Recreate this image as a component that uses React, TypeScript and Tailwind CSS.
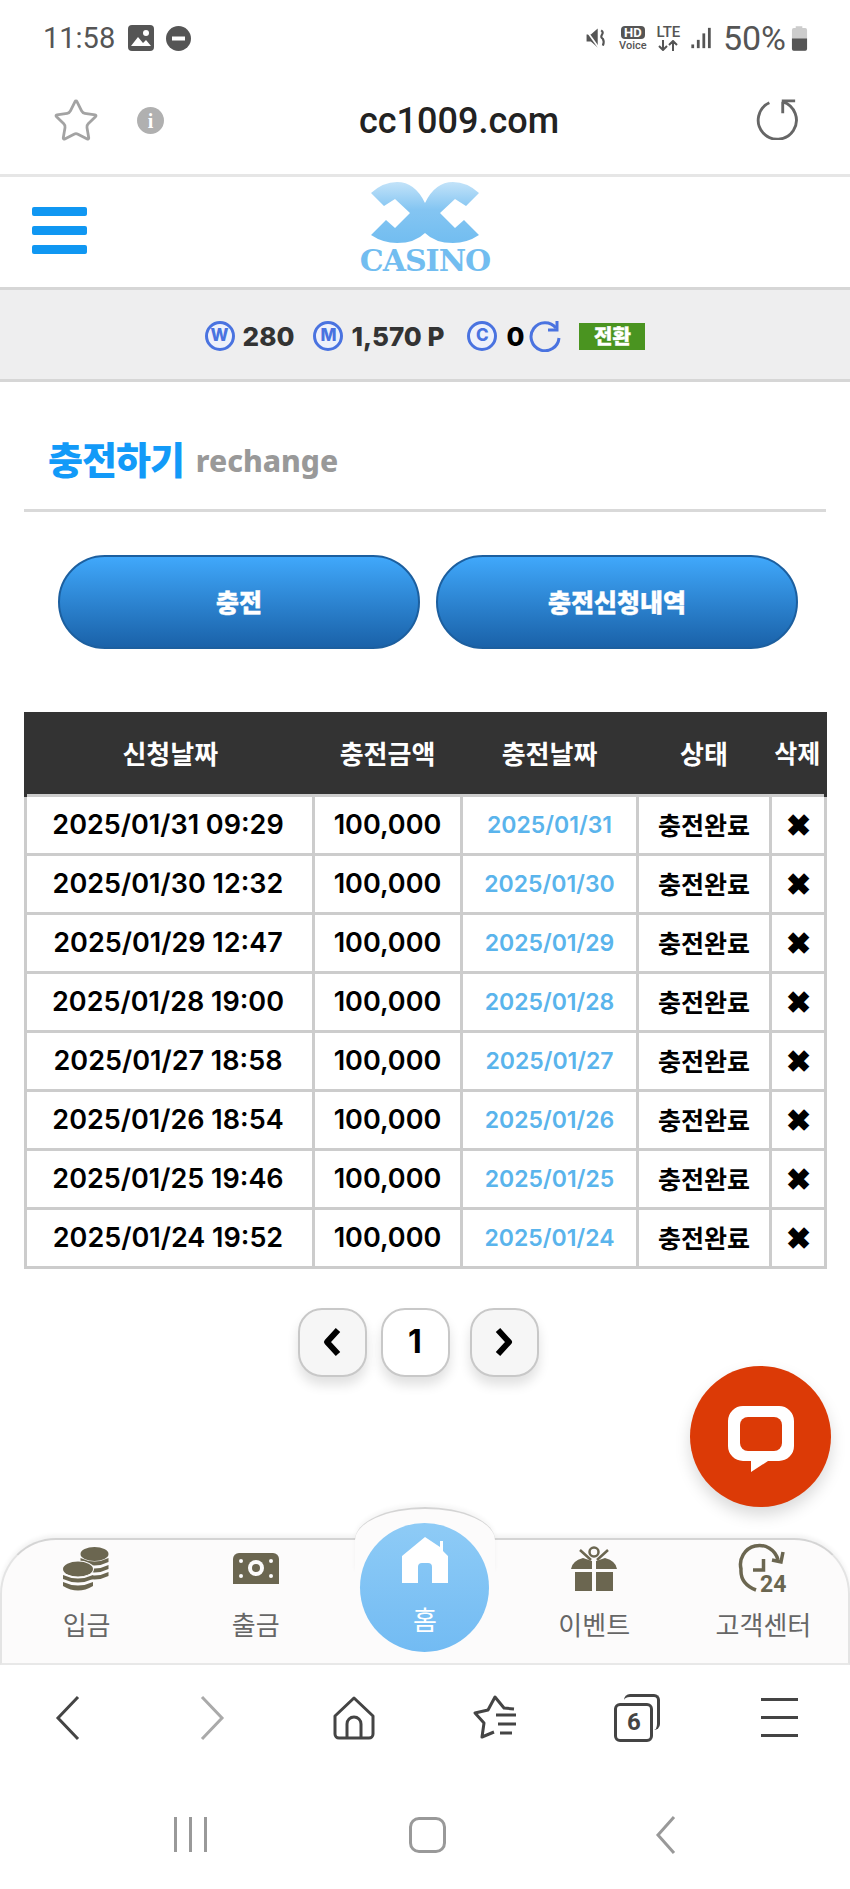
import { Star } from 'lucide-react'

const KR = "font-['Noto_Sans_CJK_KR',sans-serif]"
const NUM = "font-['Inter','Noto_Sans_CJK_KR',sans-serif]"

const rows = [
  ['2025/01/31 09:29', '2025/01/31'],
  ['2025/01/30 12:32', '2025/01/30'],
  ['2025/01/29 12:47', '2025/01/29'],
  ['2025/01/28 19:00', '2025/01/28'],
  ['2025/01/27 18:58', '2025/01/27'],
  ['2025/01/26 18:54', '2025/01/26'],
  ['2025/01/25 19:46', '2025/01/25'],
  ['2025/01/24 19:52', '2025/01/24'],
]

function CircleBadge({ letter }: { letter: string }) {
  return (
    <span className="flex h-[30px] w-[30px] items-center justify-center rounded-full border-[3px] border-[#4a73e0] bg-[#eef1fb] font-['Inter',sans-serif] text-[17px] font-extrabold text-[#4a73e0]">
      {letter}
    </span>
  )
}

function StatusIcons() {
  return (
    <div className="flex items-center text-[#555]">
      {/* muted */}
      <svg width="24" height="24" viewBox="0 0 26 28" fill="currentColor">
        <path d="M2 10h5l8-7v22l-8-7H2z" />
        <path d="M1 4l15 21" stroke="#fff" strokeWidth="2" />
        <path d="M19 5q3 2 1 5t1 5q2 3 0 8" fill="none" stroke="currentColor" strokeWidth="2.5" />
      </svg>
      <div className="ml-[11px] flex w-[28px] flex-col items-center font-['Roboto',sans-serif] leading-none">
        <span className="rounded-[4px] bg-[#555] px-[3px] text-[13px] font-bold leading-[13px] text-white">HD</span>
        <span className="mt-[1px] text-[11px] font-medium leading-[11px]">Voice</span>
      </div>
      <div className="ml-[8px] flex w-[27px] flex-col items-center font-['Roboto',sans-serif] leading-none">
        <span className="text-[15px] font-medium leading-[14px]">LTE</span>
        <svg className="mt-[1px]" width="22" height="11" viewBox="0 0 22 11" fill="none" stroke="currentColor" strokeWidth="2">
          <path d="M6 0v10M2 6l4 4 4-4M16 11V1M12 5l4-4 4 4" />
        </svg>
      </div>
      <svg className="ml-[8px]" width="23" height="24" viewBox="0 0 24 26" fill="currentColor">
        <rect x="1" y="20" width="3" height="4" />
        <rect x="7" y="15" width="3" height="9" />
        <rect x="13" y="8" width="3" height="16" />
        <rect x="19" y="2" width="3" height="22" />
      </svg>
      <span className="ml-[10px] font-['Roboto',sans-serif] text-[34px] leading-none">50%</span>
      <svg className="ml-[5px]" width="17" height="26" viewBox="0 0 18 27">
        <path d="M5 3V1h7v2h3a2 2 0 0 1 2 2v20a2 2 0 0 1-2 2H3a2 2 0 0 1-2-2V5a2 2 0 0 1 2-2z" fill="#ccc" />
        <path d="M1 14h16v11a2 2 0 0 1-2 2H3a2 2 0 0 1-2-2z" fill="#555" />
      </svg>
    </div>
  )
}

function Logo() {
  return (
    <div className="flex flex-col items-center">
      <svg width="108" height="62" viewBox="6 4 108 62">
        <defs>
          <linearGradient id="logoFill" x1="0" y1="0" x2="0" y2="1">
            <stop offset="0" stopColor="#c3e3f9" />
            <stop offset="0.45" stopColor="#84c5f2" />
            <stop offset="1" stopColor="#72bdf0" />
          </linearGradient>
        </defs>
        <path
          d="M6 15Q18 4 32 4Q50 4 60 25L63 40L60 55Q50 65 32 65Q18 65 6 57L21 42L30 50L45 35L30 21L19 28Z"
          fill="url(#logoFill)"
        />
        <path
          d="M114 15Q102 4 88 4Q70 4 60 25L57 40L60 55Q70 65 88 65Q102 65 114 57L99 42L90 50L75 35L90 21L101 28Z"
          fill="url(#logoFill)"
        />
      </svg>
      <span className="mt-[3px] font-['DejaVu_Serif',serif] text-[30px] font-bold leading-[28px] tracking-[-1px] text-[#72bdf0]">
        CASINO
      </span>
    </div>
  )
}

function NavIcon({ name }: { name: string }) {
  if (name === 'coins') {
    return (
      <svg width="48" height="46" viewBox="22 17 48 46" fill="#6b6650">
        <ellipse cx="53.5" cy="25" rx="14" ry="7" />
        <path d="M39.5 29Q53.5 36 67.5 29v4Q53.5 40 39.5 33zM39.5 36Q53.5 43 67.5 36v4Q53.5 47 39.5 40zM39.5 43Q53.5 50 67.5 43v4Q53.5 54 39.5 47z" />
        <ellipse cx="37" cy="40" rx="16" ry="8.5" fill="#fcfbfb" />
        <ellipse cx="37" cy="40" rx="15" ry="7.5" />
        <path d="M22 44Q37 52 52 44v4Q37 56 22 48z" fill="#fcfbfb" />
        <path d="M22 46Q37 53 52 46v4Q37 57 22 50zM22 53Q37 60 52 53v4Q37 66 22 57z" />
      </svg>
    )
  }
  if (name === 'money') {
    return (
      <svg width="46" height="31" viewBox="0 0 46 31" fill="#6b6650">
        <path d="M6 0h34a6 6 0 0 1 6 6v25H0V6a6 6 0 0 1 6-6z" />
        <circle cx="23" cy="15" r="8" fill="#fcfbfb" />
        <circle cx="23" cy="15" r="4" />
        <circle cx="8" cy="8" r="2" fill="#fcfbfb" />
        <circle cx="38" cy="8" r="2" fill="#fcfbfb" />
        <circle cx="8" cy="23" r="2" fill="#fcfbfb" />
        <circle cx="38" cy="23" r="2" fill="#fcfbfb" />
      </svg>
    )
  }
  if (name === 'gift') {
    return (
      <svg width="46" height="46" viewBox="32 18 46 46" fill="#6b6650">
        <path d="M32 41Q33 33 44 30L53 33V41zM78 41Q77 33 66 30L57 33V41z" />
        <rect x="36" y="44" width="17" height="19" />
        <rect x="57" y="44" width="17" height="19" />
        <g fill="none" stroke="#6b6650" strokeWidth="2.5">
          <circle cx="55" cy="24" r="4.5" />
          <path d="M41 22l11 10M69 22L58 32" />
        </g>
      </svg>
    )
  }
  return (
    <svg className="overflow-visible" width="48" height="48" viewBox="202 16 48 48" fill="none" stroke="#6b6650" strokeWidth="3.5">
      <path d="M219 61Q203 55 204 40A19 19 0 0 1 241 31" />
      <path d="M246 23l-2 10-9-2" />
      <path d="M226.500 30v11h-10.500" />
      <text x="223" y="63" fontFamily="Roboto, sans-serif" fontSize="23" fontWeight="700" fill="#6b6650" stroke="none">
        24
      </text>
    </svg>
  )
}

function NavItem({ icon, label }: { icon: string; label: string }) {
  return (
    <div className="flex flex-col items-center">
      <div className="flex h-[50px] items-center">
        <NavIcon name={icon} />
      </div>
      <span className={`${KR} mt-[13px] text-[26px] leading-[34px] text-[#666]`}>{label}</span>
    </div>
  )
}

export default function App() {
  return (
    <div className={`${KR} relative flex h-[1889px] w-[850px] flex-col overflow-hidden bg-white`}>
      {/* status bar */}
      <div className="flex h-[75px] items-center justify-between pl-[43px] pr-[42px] pt-[1px]">
        <div className="flex items-center text-[#555]">
          <span className="font-['Roboto',sans-serif] text-[29px] leading-none">11:58</span>
          <svg className="ml-[13px]" width="26" height="26" viewBox="0 0 26 26">
            <rect width="26" height="26" rx="4" fill="#555" />
            <circle cx="18" cy="8" r="3" fill="#fff" />
            <path d="M3 21l7-9 5 6 3-3 5 6z" fill="#fff" />
          </svg>
          <svg className="ml-[12px]" width="25" height="25" viewBox="0 0 25 25">
            <circle cx="12.5" cy="12.5" r="12.5" fill="#555" />
            <rect x="6" y="10.5" width="13" height="4" fill="#fff" />
          </svg>
        </div>
        <StatusIcons />
      </div>

      {/* browser address bar */}
      <div className="grid h-[102px] grid-cols-[210px_1fr_142px] items-center border-b-[3px] border-[#e6e6e6] pb-[8px]">
        <div className="flex items-center pl-[52px]">
          <Star size={48} strokeWidth={1.4} className="text-[#a3a3a3]" />
          <span className="ml-[37px] flex h-[27px] w-[27px] shrink-0 items-center justify-center rounded-full bg-[#b0b0b0] font-['Liberation_Serif',serif] text-[20px] font-bold text-white">
            i
          </span>
        </div>
        <div className="text-center font-['Roboto',sans-serif] text-[36px] font-medium leading-none text-[#222]">cc1009.com</div>
        <div className="flex justify-end pb-[4px] pr-[52px]">
          <svg width="42" height="42" viewBox="0 0 44 44" fill="none" stroke="#666" strokeWidth="3">
            <path d="M14 5A20 20 0 1 0 28 4" />
            <path d="M28 4V16M27 3h14" />
          </svg>
        </div>
      </div>

      {/* site header */}
      <div className="relative flex h-[113px] justify-center border-b-[3px] border-[#d6d6d6] pt-[5px]">
        <div className="absolute left-[32px] top-[30px] flex w-[55px] flex-col gap-[10px]">
          <span className="h-[9px] rounded-[2px] bg-[#1097f2]" />
          <span className="h-[9px] rounded-[2px] bg-[#1097f2]" />
          <span className="h-[9px] rounded-[2px] bg-[#1097f2]" />
        </div>
        <Logo />
      </div>

      {/* balance */}
      <div className="flex h-[92px] items-center justify-center border-b-[3px] border-[#d6d6d6] bg-[#eeeeef] pt-[3px] font-['Inter',sans-serif] text-[26px] font-extrabold text-[#333]">
        <CircleBadge letter="W" />
        <span className="ml-[8px]">280</span>
        <span className="ml-[19px]"><CircleBadge letter="M" /></span>
        <span className="ml-[8px]">1,570 P</span>
        <span className="ml-[23px]"><CircleBadge letter="C" /></span>
        <span className="ml-[9px] text-black">0</span>
        <svg className="ml-[5px]" width="32" height="32" viewBox="0 0 32 32" fill="none" stroke="#4a73e0" strokeWidth="3">
          <path d="M27 8A14 14 0 1 0 30 18" />
          <path d="M28 1v9h-9" />
        </svg>
        <span className={`${KR} ml-[18px] flex h-[27px] w-[66px] items-center justify-center bg-[#4a9420] text-[20px] font-black leading-none text-white [-webkit-text-stroke:0.4px_white]`}>
          전환
        </span>
      </div>

      <main className="px-[24px]">
        {/* title */}
        <div className="flex h-[130px] items-center gap-[12px] border-b-[3px] border-[#d9d9d9] pl-[24px] pt-[24px]">
          <span className="text-[38px] font-black leading-none tracking-[-1px] text-[#129af8]">충전하기</span>
          <span className="mt-[7px] font-['Noto_Sans',sans-serif] text-[30px] font-extrabold leading-none text-[#999]">rechange</span>
        </div>

        {/* tabs */}
        <div className="mt-[43px] flex gap-[16px] pl-[34px] pr-[28px]">
          <button className="h-[94px] w-[362px] rounded-[47px] border-2 border-[#1c5f9f] bg-gradient-to-b from-[#40a8fb] to-[#1a62a9] text-[25px] font-black text-white [-webkit-text-stroke:0.4px_white]">
            충전
          </button>
          <button className="h-[94px] w-[362px] rounded-[47px] border-2 border-[#1c5f9f] bg-gradient-to-b from-[#40a8fb] to-[#1a62a9] text-[25px] font-black text-white [-webkit-text-stroke:0.4px_white]">
            충전신청내역
          </button>
        </div>

        {/* history */}
        <table className="mt-[63px] w-[800px] table-fixed border-collapse">
          <thead>
            <tr className="h-[83px] bg-[#333333] text-[26px] font-black text-white">
              <th className="w-[288px] border-l-[3px] border-[#333333]">신청날짜</th>
              <th className="w-[148px]">충전금액</th>
              <th className="w-[176px]">충전날짜</th>
              <th className="w-[133px]">상태</th>
              <th className="w-[55px] border-r-[3px] border-[#333333] text-[25px]">삭제</th>
            </tr>
          </thead>
          <tbody>
            {rows.map(([requested, charged]) => (
              <tr key={requested} className="h-[59px] text-center">
                <td className={`${NUM} border-[3px] border-[#cccccc] pr-[3px] pt-[1px] text-[27px] font-semibold text-black`}>{requested}</td>
                <td className={`${NUM} border-[3px] border-[#cccccc] pt-[1px] text-[27px] font-semibold text-black`}>100,000</td>
                <td className={`${NUM} border-[3px] border-[#cccccc] pt-[1px] text-[23px] font-semibold text-[#5ab4ec]`}>{charged}</td>
                <td className="border-[3px] border-[#cccccc] text-[25px] font-bold text-black">충전완료</td>
                <td className="border-[3px] border-[#cccccc] pb-[3px] text-[30px] font-black leading-none text-black">✖</td>
              </tr>
            ))}
          </tbody>
        </table>

        {/* pagination */}
        <div className="mt-[39px] flex justify-center pr-[14px] font-['Inter',sans-serif]">
          <button className="flex h-[69px] w-[69px] items-center justify-center rounded-[24px] border-2 border-[#c8c8c8] bg-[#f6f6f6] shadow-[0_8px_12px_rgba(0,0,0,0.12)]">
            <svg width="22" height="30" viewBox="0 0 22 30" fill="none" stroke="#000" strokeWidth="6" strokeLinejoin="round">
              <path d="M17 3L6 15l11 12" />
            </svg>
          </button>
          <button className="ml-[14px] flex h-[69px] w-[69px] items-center justify-center rounded-[24px] border-2 border-[#c8c8c8] bg-white text-[32px] font-bold text-black shadow-[0_8px_12px_rgba(0,0,0,0.12)]">
            1
          </button>
          <button className="ml-[20px] flex h-[69px] w-[69px] items-center justify-center rounded-[24px] border-2 border-[#c8c8c8] bg-[#f6f6f6] shadow-[0_8px_12px_rgba(0,0,0,0.12)]">
            <svg width="22" height="30" viewBox="0 0 22 30" fill="none" stroke="#000" strokeWidth="6" strokeLinejoin="round">
              <path d="M5 3l11 12L5 27" />
            </svg>
          </button>
        </div>
      </main>

      {/* site bottom nav */}
      <nav className="relative mt-[161px] grid h-[127px] grid-cols-5 rounded-t-[56px] border-x-2 border-b-2 border-t-2 border-x-[#e4e4e4] border-b-[#e8e8e8] border-t-[#d4d4d4] bg-[#fcfbfb] pt-[4px] shadow-[0_-3px_4px_rgba(0,0,0,0.05)]">
        <div className="absolute left-[353px] top-[-33px] h-[66px] w-[140px] rounded-t-[50%] border-t-2 border-[#d4d4d4] bg-[#fcfbfb] shadow-[0_-3px_4px_rgba(0,0,0,0.04)]" />
        <NavItem icon="coins" label="입금" />
        <NavItem icon="money" label="출금" />
        <div className="relative">
          <div className="absolute left-[20px] top-[-21px] flex h-[129px] w-[129px] flex-col items-center rounded-full bg-gradient-to-b from-[#8ecbf6] to-[#72bbf3] pt-[14px]">
            <svg width="46" height="46" viewBox="0 0 46 46" fill="#fff">
              <path d="M23 0L38 10V4h3v10l5 5v27H30V30a4 4 0 0 0-4-4h-6a4 4 0 0 0-4 4v16H0V19z" />
            </svg>
            <span className="mt-[19px] text-[26px] leading-[34px] text-white">홈</span>
          </div>
        </div>
        <NavItem icon="gift" label="이벤트" />
        <NavItem icon="clock" label="고객센터" />
      </nav>

      {/* browser toolbar */}
      <div className="grid h-[106px] grid-cols-6 items-center text-[#444]">
        <div className="flex justify-center pr-[6px]">
          <svg width="28" height="46" viewBox="0 0 28 46" fill="none" stroke="#444" strokeWidth="3">
            <path d="M24 2L4 23l20 21" />
          </svg>
        </div>
        <div className="flex justify-center">
          <svg width="28" height="46" viewBox="0 0 28 46" fill="none" stroke="#aaa" strokeWidth="3">
            <path d="M4 2l20 21L4 44" />
          </svg>
        </div>
        <div className="flex justify-center">
          <svg width="44" height="44" viewBox="0 0 44 44" fill="none" stroke="#444" strokeWidth="3">
            <path d="M3 20L22 2l19 18v18a4 4 0 0 1-4 4H7a4 4 0 0 1-4-4z" strokeLinejoin="round" />
            <path d="M15 42V28a7 7 0 0 1 14 0v14" />
          </svg>
        </div>
        <div className="flex justify-center">
          <svg width="48" height="46" viewBox="0 0 48 46" fill="none" stroke="#444" strokeWidth="3" strokeLinejoin="round">
            <path d="M24 20h20M26 29h18M28 38h12" />
            <path d="M42 14l-10-1-9-11-7 13-13 3 9 10-2 14 12-5" />
          </svg>
        </div>
        <div className="flex justify-center">
          <div className="relative h-[48px] w-[46px]">
            <div className="absolute right-0 top-0 h-[36px] w-[36px] rounded-[6px] border-r-[3px] border-t-[3px] border-[#444]" />
            <div className="absolute bottom-0 left-0 flex h-[39px] w-[39px] items-center justify-center rounded-[6px] border-[3px] border-[#444] bg-white font-['Roboto',sans-serif] text-[24px] font-bold leading-none">
              6
            </div>
          </div>
        </div>
        <div className="flex justify-center">
          <div className="flex w-[37px] flex-col gap-[15px]">
            <span className="h-[3px] bg-[#444]" />
            <span className="h-[3px] bg-[#444]" />
            <span className="h-[3px] bg-[#444]" />
          </div>
        </div>
      </div>

      {/* android nav */}
      <div className="mt-[34px] flex h-[60px] items-center">
        <div className="flex w-[380px] justify-center gap-[12px]">
          <span className="h-[35px] w-[3px] bg-[#999]" />
          <span className="h-[35px] w-[3px] bg-[#999]" />
          <span className="h-[35px] w-[3px] bg-[#999]" />
        </div>
        <div className="ml-[29px] h-[36px] w-[37px] rounded-[10px] border-[3px] border-[#999]" />
        <svg className="ml-[208px]" width="24" height="40" viewBox="0 0 24 40" fill="none" stroke="#999" strokeWidth="3">
          <path d="M20 2L4 20l16 18" />
        </svg>
      </div>

      {/* chat button */}
      <div className="absolute left-[690px] top-[1366px] flex h-[141px] w-[141px] items-center justify-center rounded-full bg-[#dc3a06] shadow-[0_8px_16px_rgba(0,0,0,0.15)]">
        <svg className="mt-[5px]" width="70" height="70" viewBox="0 0 70 70" fill="none">
          <path
            d="M17 2h36a15 15 0 0 1 15 15v25a15 15 0 0 1-15 15H42L25 68v-11h-8A15 15 0 0 1 2 42V17A15 15 0 0 1 17 2z"
            fill="#fff"
          />
          <rect x="14" y="13" width="42" height="34" rx="8" fill="#dc3a06" />
        </svg>
      </div>
    </div>
  )
}
